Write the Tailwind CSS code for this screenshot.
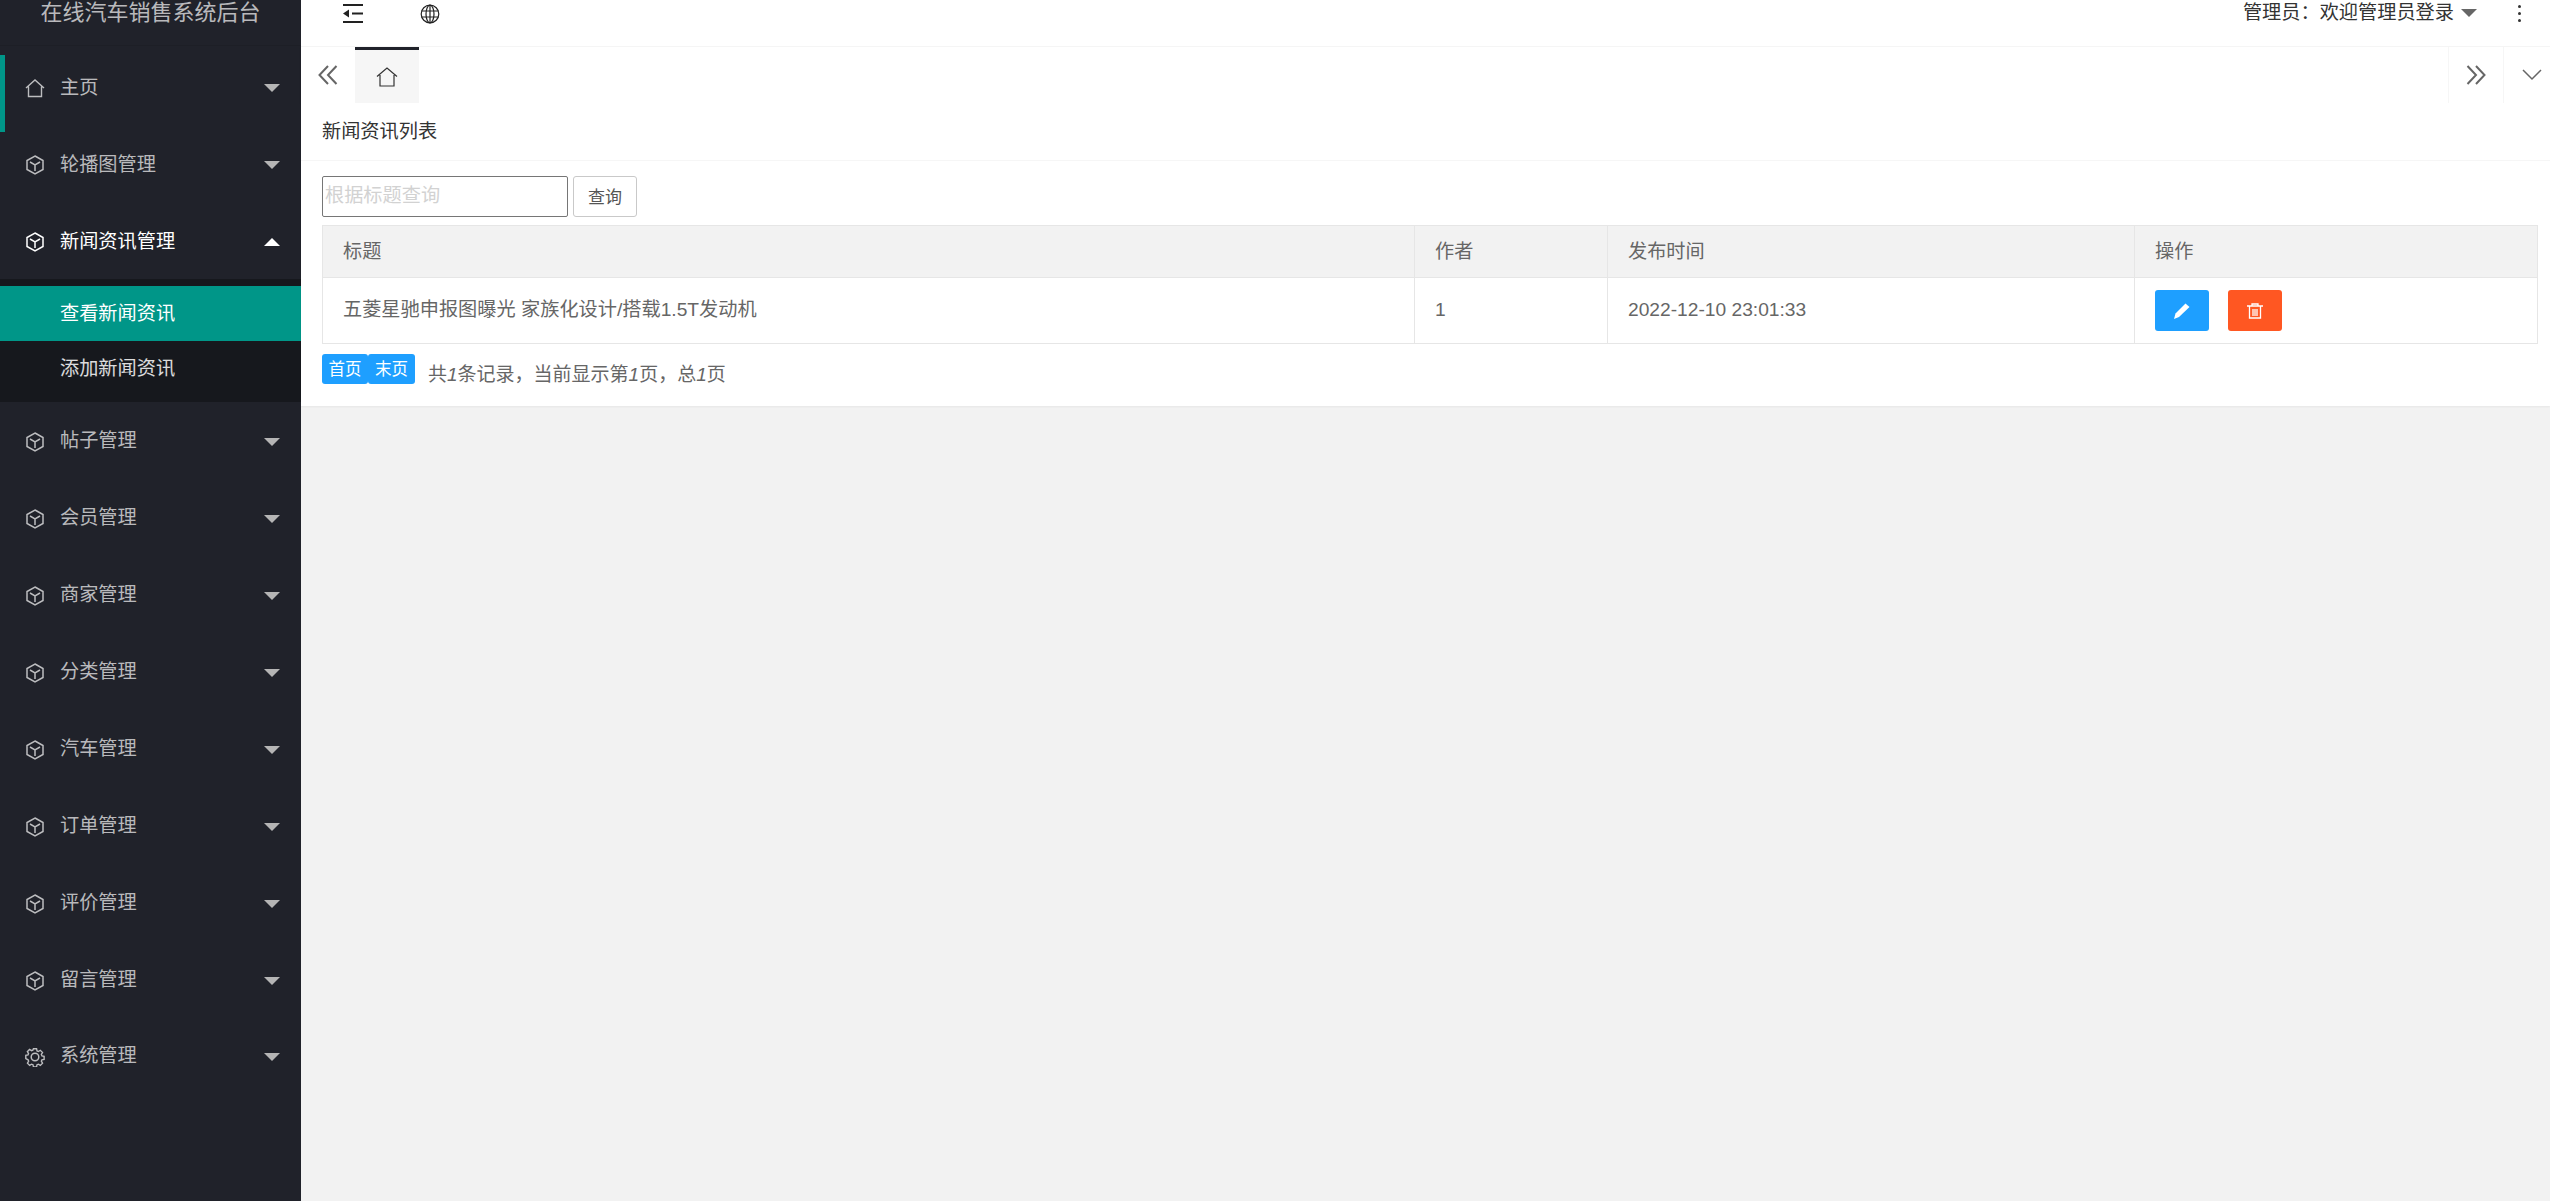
<!DOCTYPE html>
<html lang="zh"><head><meta charset="utf-8"><title>新闻资讯列表</title>
<script src="https://cdn.jsdelivr.net/npm/@tailwindcss/browser@4"></script></head>
<body class="m-0 overflow-hidden bg-[#f2f2f2] font-['Liberation_Sans','Noto_Sans_CJK_SC',sans-serif] text-[19.2px] text-[#666]">
<div class="flex h-[1201px] w-[2550px]">
<aside class="w-[301px] shrink-0 bg-[#20222a] text-white/70">
  <div class="h-[46px] border-b border-[#1d1f26] text-center text-[22px] leading-[26px] text-white/70">在线汽车销售系统后台</div>
  <div class="h-[9px]"></div>
  <nav>
    <div class="relative flex h-[77px] items-center pb-[11px] pl-[25px] pr-[21px]"><span class="absolute left-0 top-0 h-[77px] w-[5px] bg-[#009688]"></span>
      <svg class="mr-[15px] h-[20px] w-[20px] shrink-0" viewBox="0 0 20 20" fill="none" stroke="currentColor" stroke-width="1.4"><path d="M1 10 10 2l9 8M3.500 8.500V18.500h13V8.500"/></svg><span class="grow">主页</span><span class="h-0 w-0 border-x-[8px] border-t-[8px] border-x-transparent border-t-[#b5b5b5]"></span></div>
    <div class="flex h-[77px] items-center pb-[11px] pl-[25px] pr-[21px]">
      <svg class="mr-[15px] h-[20px] w-[20px] shrink-0" viewBox="0 0 20 20" fill="none" stroke="currentColor" stroke-width="1.5"><path d="M10 1 18 5.500V14.500L10 19 2 14.500V5.500ZM5 7l5 3 5-3M10 10v6"/></svg><span class="grow">轮播图管理</span><span class="h-0 w-0 border-x-[8px] border-t-[8px] border-x-transparent border-t-[#b5b5b5]"></span></div>
    <div class="flex h-[70px] items-center pb-[4px] pl-[25px] pr-[21px] text-white">
      <svg class="mr-[15px] h-[20px] w-[20px] shrink-0" viewBox="0 0 20 20" fill="none" stroke="currentColor" stroke-width="1.5"><path d="M10 1 18 5.500V14.500L10 19 2 14.500V5.500ZM5 7l5 3 5-3M10 10v6"/></svg><span class="grow">新闻资讯管理</span><span class="h-0 w-0 border-x-[8px] border-b-[8px] border-x-transparent border-b-white"></span></div>
    <div class="bg-[#16181d] pb-[6px] pt-[7px] text-white">
      <div class="flex h-[55px] items-center bg-[#009688] pl-[60px] pt-[2px]">查看新闻资讯</div>
      <div class="flex h-[55px] items-center pl-[60px] pt-[2px] text-white/85">添加新闻资讯</div>
    </div>
    <div class="flex h-[77px] items-center pl-[25px] pr-[21px] pt-[2px]">
      <svg class="mr-[15px] h-[20px] w-[20px] shrink-0" viewBox="0 0 20 20" fill="none" stroke="currentColor" stroke-width="1.5"><path d="M10 1 18 5.500V14.500L10 19 2 14.500V5.500ZM5 7l5 3 5-3M10 10v6"/></svg><span class="grow">帖子管理</span><span class="h-0 w-0 border-x-[8px] border-t-[8px] border-x-transparent border-t-[#b5b5b5]"></span></div>
    <div class="flex h-[77px] items-center pl-[25px] pr-[21px] pt-[2px]">
      <svg class="mr-[15px] h-[20px] w-[20px] shrink-0" viewBox="0 0 20 20" fill="none" stroke="currentColor" stroke-width="1.5"><path d="M10 1 18 5.500V14.500L10 19 2 14.500V5.500ZM5 7l5 3 5-3M10 10v6"/></svg><span class="grow">会员管理</span><span class="h-0 w-0 border-x-[8px] border-t-[8px] border-x-transparent border-t-[#b5b5b5]"></span></div>
    <div class="flex h-[77px] items-center pl-[25px] pr-[21px] pt-[2px]">
      <svg class="mr-[15px] h-[20px] w-[20px] shrink-0" viewBox="0 0 20 20" fill="none" stroke="currentColor" stroke-width="1.5"><path d="M10 1 18 5.500V14.500L10 19 2 14.500V5.500ZM5 7l5 3 5-3M10 10v6"/></svg><span class="grow">商家管理</span><span class="h-0 w-0 border-x-[8px] border-t-[8px] border-x-transparent border-t-[#b5b5b5]"></span></div>
    <div class="flex h-[77px] items-center pl-[25px] pr-[21px] pt-[2px]">
      <svg class="mr-[15px] h-[20px] w-[20px] shrink-0" viewBox="0 0 20 20" fill="none" stroke="currentColor" stroke-width="1.5"><path d="M10 1 18 5.500V14.500L10 19 2 14.500V5.500ZM5 7l5 3 5-3M10 10v6"/></svg><span class="grow">分类管理</span><span class="h-0 w-0 border-x-[8px] border-t-[8px] border-x-transparent border-t-[#b5b5b5]"></span></div>
    <div class="flex h-[77px] items-center pl-[25px] pr-[21px] pt-[2px]">
      <svg class="mr-[15px] h-[20px] w-[20px] shrink-0" viewBox="0 0 20 20" fill="none" stroke="currentColor" stroke-width="1.5"><path d="M10 1 18 5.500V14.500L10 19 2 14.500V5.500ZM5 7l5 3 5-3M10 10v6"/></svg><span class="grow">汽车管理</span><span class="h-0 w-0 border-x-[8px] border-t-[8px] border-x-transparent border-t-[#b5b5b5]"></span></div>
    <div class="flex h-[77px] items-center pl-[25px] pr-[21px] pt-[2px]">
      <svg class="mr-[15px] h-[20px] w-[20px] shrink-0" viewBox="0 0 20 20" fill="none" stroke="currentColor" stroke-width="1.5"><path d="M10 1 18 5.500V14.500L10 19 2 14.500V5.500ZM5 7l5 3 5-3M10 10v6"/></svg><span class="grow">订单管理</span><span class="h-0 w-0 border-x-[8px] border-t-[8px] border-x-transparent border-t-[#b5b5b5]"></span></div>
    <div class="flex h-[77px] items-center pl-[25px] pr-[21px] pt-[2px]">
      <svg class="mr-[15px] h-[20px] w-[20px] shrink-0" viewBox="0 0 20 20" fill="none" stroke="currentColor" stroke-width="1.5"><path d="M10 1 18 5.500V14.500L10 19 2 14.500V5.500ZM5 7l5 3 5-3M10 10v6"/></svg><span class="grow">评价管理</span><span class="h-0 w-0 border-x-[8px] border-t-[8px] border-x-transparent border-t-[#b5b5b5]"></span></div>
    <div class="flex h-[77px] items-center pl-[25px] pr-[21px] pt-[2px]">
      <svg class="mr-[15px] h-[20px] w-[20px] shrink-0" viewBox="0 0 20 20" fill="none" stroke="currentColor" stroke-width="1.5"><path d="M10 1 18 5.500V14.500L10 19 2 14.500V5.500ZM5 7l5 3 5-3M10 10v6"/></svg><span class="grow">留言管理</span><span class="h-0 w-0 border-x-[8px] border-t-[8px] border-x-transparent border-t-[#b5b5b5]"></span></div>
    <div class="flex h-[77px] items-center pl-[25px] pr-[21px]">
      <svg class="mr-[15px] h-[20px] w-[20px] shrink-0" viewBox="0 0 20 20" fill="none" stroke="currentColor" stroke-width="1.5"><circle cx="10" cy="10" r="3.800"/><path d="M8.300 1h3.400l.5 2.400 1.500.6 2.100-1.300 2.400 2.400-1.300 2.100.6 1.500 2.400.5v3.400l-2.400.5-.6 1.500 1.300 2.100-2.400 2.400-2.100-1.300-1.500.6-.5 2.400H8.300l-.5-2.400-1.500-.6-2.100 1.300-2.400-2.400 1.300-2.100-.6-1.500L0 11.700V8.300l2.400-.5.6-1.500-1.300-2.100 2.400-2.400 2.100 1.300 1.500-.6Z" transform="translate(.8 .8) scale(.92)"/></svg><span class="grow">系统管理</span><span class="h-0 w-0 border-x-[8px] border-t-[8px] border-x-transparent border-t-[#b5b5b5]"></span></div>
  </nav>
</aside>
<main class="min-w-0 grow">
  <header class="flex h-[47px] items-start border-b border-[#f6f6f6] bg-white text-[#333]">
    <svg class="ml-[41px] mt-[4px] h-[20px] w-[22px] shrink-0" viewBox="0 0 22 20" fill="#222"><path d="M1 0h20v2H1zM1 17h20v2H1zM10 8.500h11v2H10zM1 9.500 7 5.500v8z"/></svg>
    <svg class="ml-[56px] mt-[4px] h-[20px] w-[20px] shrink-0" viewBox="0 0 20 20" fill="none" stroke="#222" stroke-width="1.200"><circle cx="10" cy="10" r="8.800"/><ellipse cx="10" cy="10" rx="4" ry="8.800"/><path d="M10 1v18M1.500 7h17M1.500 13h17"/></svg>
    <span class="ml-auto mt-[1px] leading-[24px]">管理员：欢迎管理员登录</span>
    <span class="ml-[7px] mt-[9px] h-0 w-0 border-x-[8px] border-t-[8px] border-x-transparent border-t-[#666]"></span>
    <span class="ml-[41px] mr-[29px] mt-[5px] flex flex-col gap-[4px]"><i class="block h-[3px] w-[3px] rounded-full bg-[#333]"></i><i class="block h-[3px] w-[3px] rounded-full bg-[#333]"></i><i class="block h-[3px] w-[3px] rounded-full bg-[#333]"></i></span>
  </header>
  <div class="flex h-[56px] items-stretch bg-white shadow-[0_1px_2px_rgba(0,0,0,.1)]">
    <div class="flex w-[54px] items-center justify-center text-[#666]"><svg class="h-[20px] w-[20px]" viewBox="0 0 20 20" fill="none" stroke="currentColor" stroke-width="2"><path d="M10 1 1.500 10l8.500 9M18.500 1 10 10l8.500 9"/></svg></div>
    <div class="flex w-[64px] items-center justify-center border-t-[3px] border-[#20222a] bg-[#f6f6f6] text-[#333]"><svg class="h-[20px] w-[22px]" viewBox="0 0 22 20" fill="none" stroke="currentColor" stroke-width="1.200"><path d="M1 9.500 11 1l10 8.500M4 8v11h14V8"/></svg></div>
    <div class="grow"></div>
    <div class="flex w-[55px] items-center justify-center border-l border-[#f6f6f6] text-[#666]"><svg class="h-[20px] w-[20px]" viewBox="0 0 20 20" fill="none" stroke="currentColor" stroke-width="2"><path d="M1.500 1 10 10l-8.500 9M10 1l8.500 9-8.500 9"/></svg></div>
    <div class="flex w-[47px] items-center justify-center border-l border-[#f6f6f6] pl-[10px] text-[#666]"><svg class="h-[12px] w-[20px]" viewBox="0 0 20 12" fill="none" stroke="currentColor" stroke-width="1.500"><path d="M1 1l9 9 9-9"/></svg></div>
  </div>
  <section class="bg-white pb-[15px] shadow-[0_1px_2px_rgba(0,0,0,.05)]">
    <div class="flex h-[58px] items-center border-b border-[#f6f6f6] px-[21px] pt-[2px] text-[#333]">新闻资讯列表</div>
    <div class="pl-[21px] pr-[12px]">
      <div class="flex items-center pt-[14px]">
        <input class="h-[41px] w-[246px] rounded-[2px] border border-[#767676] bg-white px-[2px] text-[19.2px] placeholder:text-[#d2d2d2]" placeholder="根据标题查询">
        <button class="ml-[5px] mt-[1px] h-[41px] w-[64px] rounded-[3px] border border-[#c9c9c9] bg-white pt-[2px] text-[17px] text-[#555]">查询</button>
      </div>
      <table class="mt-[8px] w-[2216px] table-fixed border-collapse border border-[#e6e6e6]">
        <colgroup><col class="w-[1092px]"><col class="w-[193px]"><col class="w-[527px]"><col></colgroup>
        <thead class="bg-[#f2f2f2]"><tr class="h-[52px]">
          <th class="border border-[#e6e6e6] px-[20px] pt-[2px] text-left font-normal">标题</th>
          <th class="border border-[#e6e6e6] px-[20px] pt-[2px] text-left font-normal">作者</th>
          <th class="border border-[#e6e6e6] px-[20px] pt-[2px] text-left font-normal">发布时间</th>
          <th class="border border-[#e6e6e6] px-[20px] pt-[2px] text-left font-normal">操作</th>
        </tr></thead>
        <tbody><tr class="h-[66px]">
          <td class="border border-[#e6e6e6] px-[20px]">五菱星驰申报图曝光 家族化设计/搭载1.5T发动机</td>
          <td class="border border-[#e6e6e6] px-[20px]">1</td>
          <td class="border border-[#e6e6e6] px-[20px]">2022-12-10 23:01:33</td>
          <td class="border border-[#e6e6e6] px-[20px]"><div class="flex gap-[19px]">
            <span class="flex h-[41px] w-[54px] items-center justify-center rounded-[3px] bg-[#1e9fff]"><svg class="h-[16px] w-[16px]" viewBox="0 0 16 16" fill="#fff"><path d="M11.500 0.500 15.500 4 5 14 0 16 1.500 10.500Z"/></svg></span>
            <span class="flex h-[41px] w-[54px] items-center justify-center rounded-[3px] bg-[#ff5722]"><svg class="h-[16px] w-[16px]" viewBox="0 0 16 16" fill="none" stroke="#fff" stroke-width="1.300"><path d="M0 3h16M5 3V1h6v2M2.500 3v12h11V3M6 6v7M8 6v7M10 6v7"/></svg></span>
          </div></td>
        </tr></tbody>
      </table>
      <div class="mt-[10px] flex items-start">
        <span class="flex h-[30px] w-[46px] items-center justify-center rounded-[3px] bg-[#1e9fff] text-[16.500px] text-white">首页</span>
        <span class="flex h-[30px] w-[47px] items-center justify-center rounded-[3px] bg-[#1e9fff] text-[16.500px] text-white">末页</span>
        <span class="ml-[13px] mt-[5px] text-[19px] leading-[32px]">共<i>1</i>条记录，当前显示第<i>1</i>页，总<i>1</i>页</span>
      </div>
    </div>
  </section>
</main>
</div>
</body></html>
